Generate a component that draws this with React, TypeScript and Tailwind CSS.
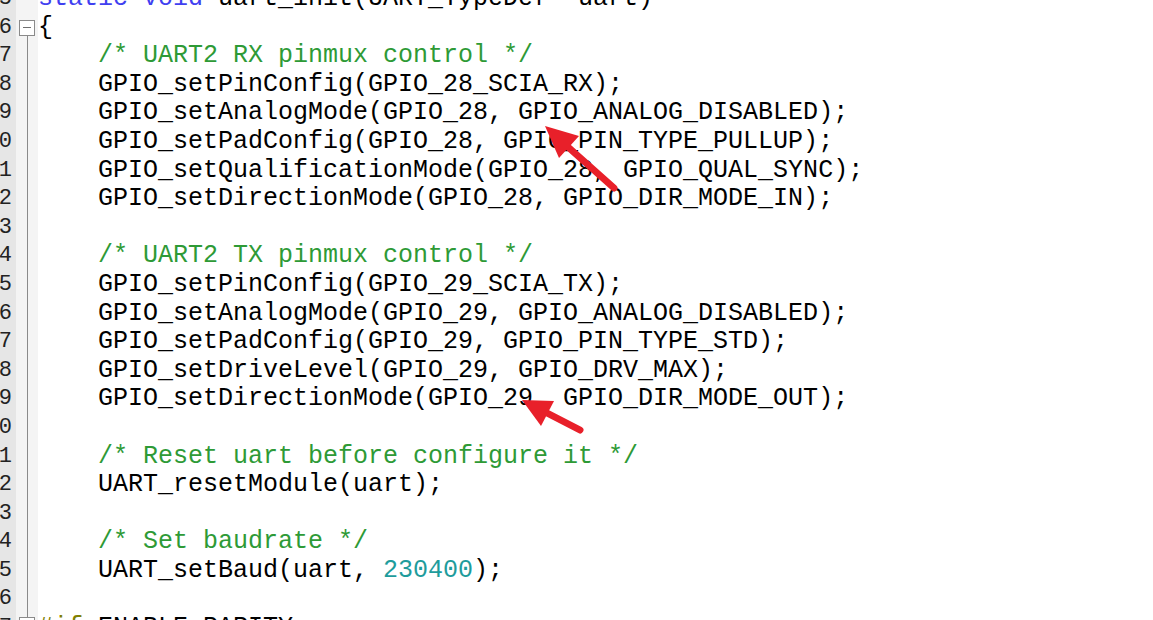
import React from 'react';

type Seg = [string, string?];

const C = {
  text: 'text-[#000000]',
  comment: 'text-[#2e9a36]',
  keyword: 'text-[#4040f0]',
  number: 'text-[#1e9c9c]',
  pre: 'text-[#808000]',
};

const lines: { no: number; segs: Seg[] }[] = [
  { no: 15, segs: [['static void', C.keyword], [' uart_init(UART_TypeDef *uart)']] },
  { no: 16, segs: [['{']] },
  { no: 17, segs: [['    '], ['/* UART2 RX pinmux control */', C.comment]] },
  { no: 18, segs: [['    GPIO_setPinConfig(GPIO_28_SCIA_RX);']] },
  { no: 19, segs: [['    GPIO_setAnalogMode(GPIO_28, GPIO_ANALOG_DISABLED);']] },
  { no: 20, segs: [['    GPIO_setPadConfig(GPIO_28, GPIO_PIN_TYPE_PULLUP);']] },
  { no: 21, segs: [['    GPIO_setQualificationMode(GPIO_28, GPIO_QUAL_SYNC);']] },
  { no: 22, segs: [['    GPIO_setDirectionMode(GPIO_28, GPIO_DIR_MODE_IN);']] },
  { no: 23, segs: [] },
  { no: 24, segs: [['    '], ['/* UART2 TX pinmux control */', C.comment]] },
  { no: 25, segs: [['    GPIO_setPinConfig(GPIO_29_SCIA_TX);']] },
  { no: 26, segs: [['    GPIO_setAnalogMode(GPIO_29, GPIO_ANALOG_DISABLED);']] },
  { no: 27, segs: [['    GPIO_setPadConfig(GPIO_29, GPIO_PIN_TYPE_STD);']] },
  { no: 28, segs: [['    GPIO_setDriveLevel(GPIO_29, GPIO_DRV_MAX);']] },
  { no: 29, segs: [['    GPIO_setDirectionMode(GPIO_29, GPIO_DIR_MODE_OUT);']] },
  { no: 30, segs: [] },
  { no: 31, segs: [['    '], ['/* Reset uart before configure it */', C.comment]] },
  { no: 32, segs: [['    UART_resetModule(uart);']] },
  { no: 33, segs: [] },
  { no: 34, segs: [['    '], ['/* Set baudrate */', C.comment]] },
  { no: 35, segs: [['    UART_setBaud(uart, '], ['230400', C.number], [');']] },
  { no: 36, segs: [] },
  { no: 37, segs: [['#if', C.pre], [' ENABLE_PARITY']] },
];

const FoldBox = () => (
  <div className="w-[16px] h-[16px] shrink-0 border border-[#8a8a8a] bg-white flex items-center justify-center">
    <div className="w-[8px] h-px bg-[#6f6f6f]" />
  </div>
);

const FoldCell: React.FC<{ no: number }> = ({ no }) => {
  if (no === 16) {
    return (
      <div className="h-full flex flex-col items-center">
        <div className="flex-1" />
        <FoldBox />
        <div className="flex-1 w-px bg-[#8a8a8a]" />
      </div>
    );
  }
  if (no === 37) {
    return (
      <div className="h-full flex flex-col items-center">
        <div className="h-[3px] w-px bg-[#8a8a8a]" />
        <FoldBox />
        <div className="flex-1" />
      </div>
    );
  }
  if (no > 16 && no < 37) {
    return (
      <div className="h-full flex justify-center">
        <div className="w-px h-full bg-[#8a8a8a]" />
      </div>
    );
  }
  return null;
};

const App: React.FC = () => {
  return (
    <div className="relative w-[1153px] h-[620px] overflow-hidden bg-white">
      <div className="flex h-full">
        {/* line numbers, scrolled so only the last digit shows */}
        <div className="w-[16px] shrink-0 bg-[#e6e6e6] overflow-hidden">
          <div className="mt-[-15px]">
            {lines.map((l) => (
              <div
                key={l.no}
                className="h-[28.6px] leading-[28.6px] flex justify-end pr-[4px] whitespace-nowrap text-[22px] text-[#222222] font-['Liberation_Mono',monospace]"
              >
                {l.no}
              </div>
            ))}
          </div>
        </div>

        {/* fold margin */}
        <div className="w-[22px] shrink-0 bg-[#f4f4f4] overflow-hidden">
          <div className="mt-[-15px]">
            {lines.map((l) => (
              <div key={l.no} className="h-[28.6px]">
                <FoldCell no={l.no} />
              </div>
            ))}
          </div>
        </div>

        {/* code */}
        <div className="flex-1 overflow-hidden">
          <div className="mt-[-15px] font-['Liberation_Mono',monospace] text-[25px] text-black">
            {lines.map((l) => (
              <div key={l.no} className="h-[28.6px] leading-[28.6px] whitespace-pre">
                {l.segs.map(([t, c], i) => (
                  <span key={i} className={c ?? C.text}>
                    {t}
                  </span>
                ))}
              </div>
            ))}
          </div>
        </div>
      </div>

      {/* annotation arrows drawn over the screenshot */}
      <svg
        className="absolute inset-0 pointer-events-none"
        width="1153"
        height="620"
        viewBox="0 0 1153 620"
      >
        <line x1="614" y1="188" x2="568" y2="147" stroke="#e8202a" strokeWidth="7" strokeLinecap="round" />
        <polygon points="545,126 579,136 559,158" fill="#e8202a" />
        <line x1="580" y1="430" x2="547" y2="413" stroke="#e8202a" strokeWidth="7" strokeLinecap="round" />
        <polygon points="522,400 554,401 541,426" fill="#e8202a" />
      </svg>
    </div>
  );
};

export default App;
